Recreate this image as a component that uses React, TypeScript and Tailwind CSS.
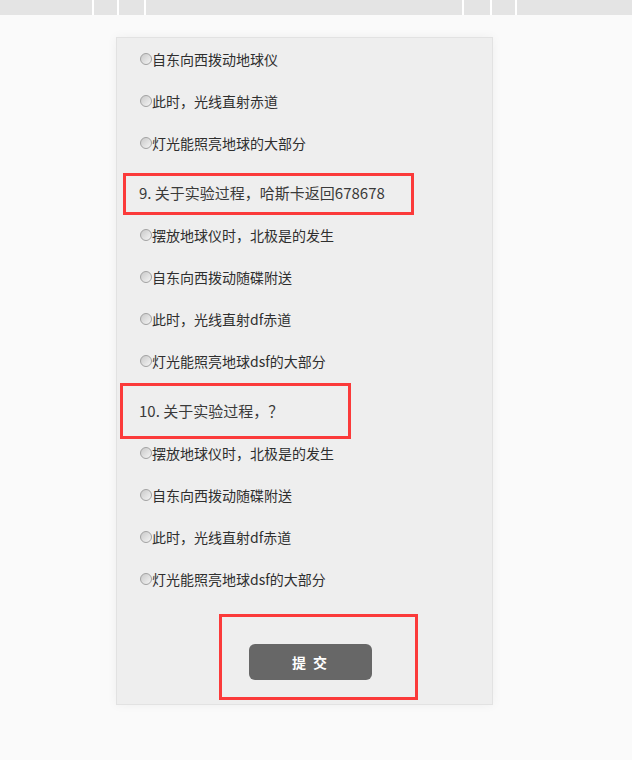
const font = {
  fontFamily: '"Noto Sans CJK SC", "Noto Sans", sans-serif',
};

type Block =
  | { kind: "q"; text: string }
  | { kind: "o"; text: string };

const blocks: Block[] = [
  { kind: "o", text: "自东向西拨动地球仪" },
  { kind: "o", text: "此时，光线直射赤道" },
  { kind: "o", text: "灯光能照亮地球的大部分" },
  { kind: "q", text: "9. 关于实验过程，哈斯卡返回678678" },
  { kind: "o", text: "摆放地球仪时，北极是的发生" },
  { kind: "o", text: "自东向西拨动随碟附送" },
  { kind: "o", text: "此时，光线直射df赤道" },
  { kind: "o", text: "灯光能照亮地球dsf的大部分" },
  { kind: "q", text: "10. 关于实验过程，？" },
  { kind: "o", text: "摆放地球仪时，北极是的发生" },
  { kind: "o", text: "自东向西拨动随碟附送" },
  { kind: "o", text: "此时，光线直射df赤道" },
  { kind: "o", text: "灯光能照亮地球dsf的大部分" },
];

function Radio() {
  return (
    <span className="mb-[1px] inline-block h-3 w-3 shrink-0 rounded-full border border-[#a2a2a2] bg-linear-to-br from-[#c9c9c9] to-[#f5f5f5]" />
  );
}

function TopBar() {
  return (
    <div className="flex h-[15px] bg-[#e4e4e4]">
      <div className="w-[94px] border-r-2 border-white" />
      <div className="w-[25px] border-r-2 border-white" />
      <div className="w-[27px] border-r-2 border-white" />
      <div className="w-[318px] border-r-2 border-white" />
      <div className="w-[28px] border-r-2 border-white" />
      <div className="w-[25px] border-r-2 border-white" />
      <div className="flex-1" />
    </div>
  );
}

export default function App() {
  return (
    <div className="min-h-[760px] bg-[#fafafa]" style={font}>
      <TopBar />
      <div className="pt-[22px]">
        <div className="relative ml-[116px] w-[377px] border border-[#e2e2e2] bg-[#eeeeee] shadow-[0_0_10px_rgba(0,0,0,0.05)]">
          <div className="pl-[22px]">
            {blocks.map((b, i) =>
              b.kind === "q" ? (
                <div
                  key={i}
                  className="h-[50px] pt-[19px] text-[15px] leading-5 text-[#3a3a3a]"
                >
                  {b.text}
                </div>
              ) : (
                <div
                  key={i}
                  className="flex h-[42px] items-center pl-px text-[14px] leading-5 text-[#2f2f2f]"
                >
                  <Radio />
                  <span>{b.text}</span>
                </div>
              )
            )}
          </div>
          <div className="pb-[24px] pl-[132px] pt-[44px]">
            <button className="h-9 w-[123px] rounded-md bg-[#676767] text-[14px] font-bold tracking-[2px] text-white">
              提 交
            </button>
          </div>

          {/* annotation boxes */}
          <div className="absolute left-[6px] top-[135px] h-[42px] w-[291px] border-[3px] border-[#fb3a3a]" />
          <div className="absolute left-[3px] top-[345px] h-[56px] w-[231px] border-[3px] border-[#fb3a3a]" />
          <div className="absolute left-[102px] top-[576px] h-[86px] w-[199px] border-[3px] border-[#fb3a3a]" />
        </div>
      </div>
    </div>
  );
}
